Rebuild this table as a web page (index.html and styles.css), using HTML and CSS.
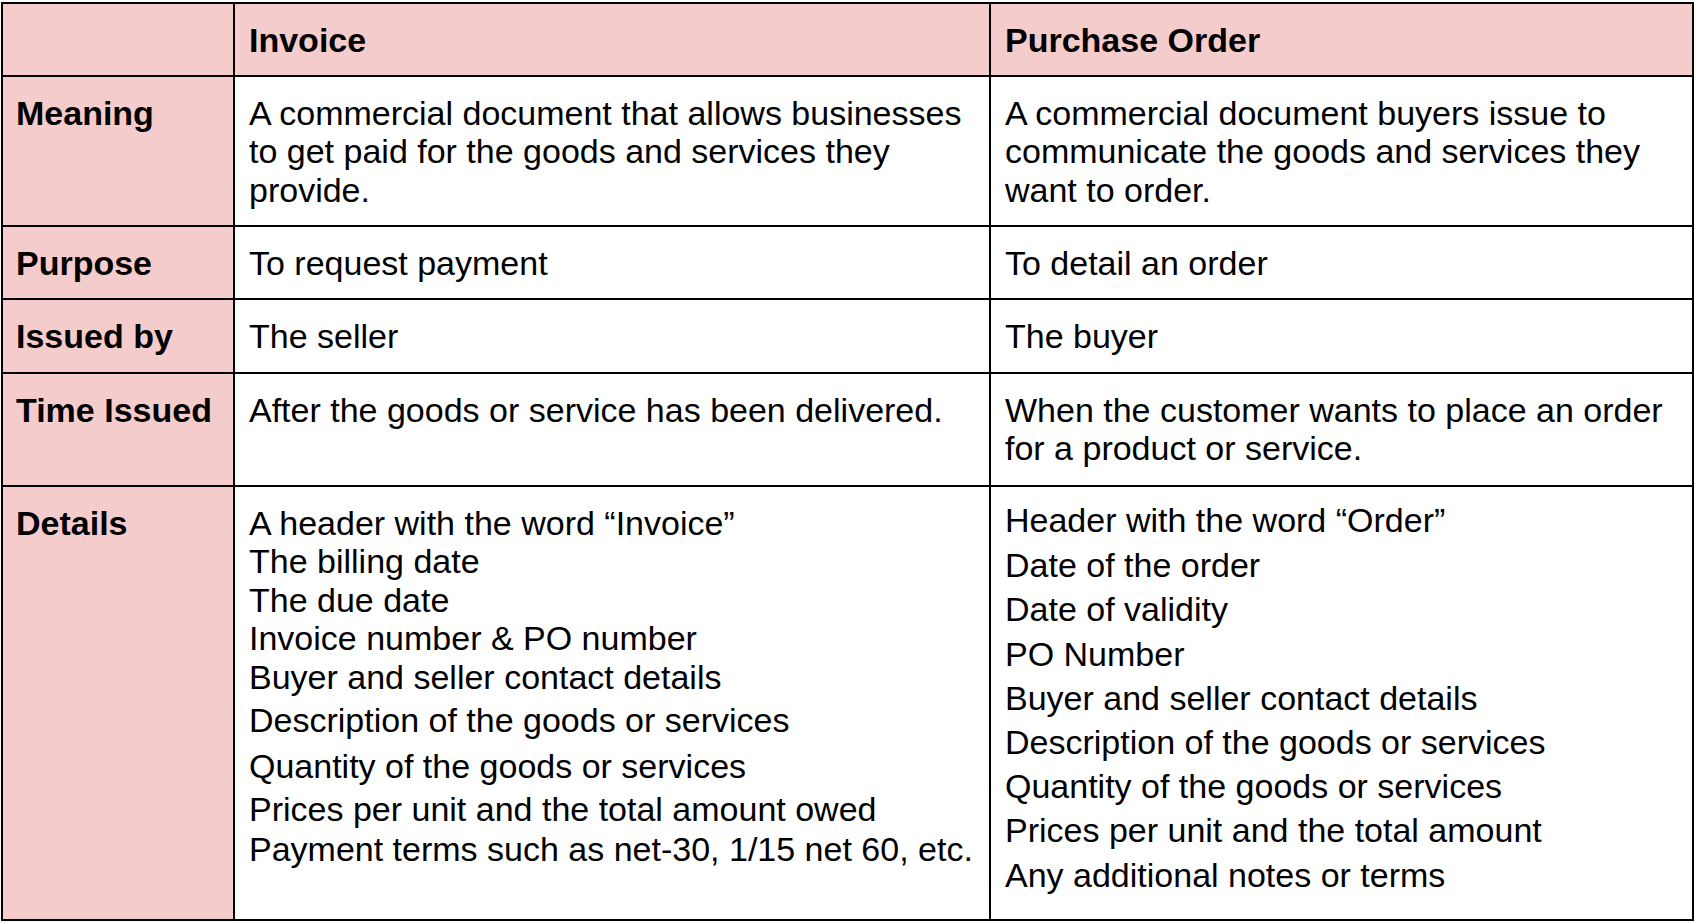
FILE: index.html
```html
<!DOCTYPE html>
<html lang="en">
<head>
<meta charset="utf-8">
<title>Invoice vs Purchase Order</title>
<link rel="stylesheet" href="styles.css">
</head>
<body>
<table class="compare">
  <colgroup>
    <col class="col-label">
    <col class="col-invoice">
    <col class="col-po">
  </colgroup>
  <tr class="row-head">
    <th class="cell label"></th>
    <th class="cell head">Invoice</th>
    <th class="cell head po">Purchase Order</th>
  </tr>
  <tr class="row-meaning">
    <td class="cell label">Meaning</td>
    <td class="cell">A commercial document that allows businesses to get paid for the goods and services they provide.</td>
    <td class="cell po">A commercial document buyers issue to communicate the goods and services they want to order.</td>
  </tr>
  <tr class="row-purpose">
    <td class="cell label">Purpose</td>
    <td class="cell">To request payment</td>
    <td class="cell po">To detail an order</td>
  </tr>
  <tr class="row-issued">
    <td class="cell label">Issued by</td>
    <td class="cell">The seller</td>
    <td class="cell po">The buyer</td>
  </tr>
  <tr class="row-time">
    <td class="cell label">Time Issued</td>
    <td class="cell">After the goods or service has been delivered.</td>
    <td class="cell po">When the customer wants to place an order for a product or service.</td>
  </tr>
  <tr class="row-details">
    <td class="cell label">Details</td>
    <td class="cell">
      <ul class="list inv-list">
        <li>A header with the word “Invoice”</li>
        <li>The billing date</li>
        <li>The due date</li>
        <li>Invoice number &amp; PO number</li>
        <li>Buyer and seller contact details</li>
        <li class="gap-5">Description of the goods or services</li>
        <li class="gap-7">Quantity of the goods or services</li>
        <li class="gap-4">Prices per unit and the total amount owed</li>
        <li class="gap-2">Payment terms such as net-30, 1/15 net 60, etc.</li>
      </ul>
    </td>
    <td class="cell po details-po">
      <ul class="list po-list">
        <li>Header with the word “Order”</li>
        <li class="gap-1">Date of the order</li>
        <li>Date of validity</li>
        <li>PO Number</li>
        <li>Buyer and seller contact details</li>
        <li>Description of the goods or services</li>
        <li>Quantity of the goods or services</li>
        <li>Prices per unit and the total amount</li>
        <li>Any additional notes or terms</li>
      </ul>
    </td>
  </tr>
</table>
</body>
</html>
```

FILE: styles.css
```css
html, body {
  margin: 0;
  padding: 0;
  background: #ffffff;
}

body {
  font-family: "Liberation Sans", Arial, sans-serif;
  color: #000000;
}

.compare {
  margin: 2px 0 0 1px;
  border-collapse: separate;
  border-spacing: 0;
  table-layout: fixed;
  width: 1693px;
  border-top: 2px solid #000;
  border-left: 2px solid #000;
}

.col-label { width: 232px; }
.col-invoice { width: 756px; }
.col-po { width: 703px; }

.cell {
  box-sizing: border-box;
  border-right: 2px solid #000;
  border-bottom: 2px solid #000;
  padding: 16.5px 10px 0 14px;
  vertical-align: top;
  text-align: left;
  font-size: 34px;
  line-height: 38.5px;
  font-weight: normal;
}

.cell.po {
  padding-left: 14px;
}

.label {
  background: #f4cccc;
  font-weight: bold;
  padding-left: 13px;
}

.head {
  background: #f4cccc;
  font-weight: bold;
}

.row-head { height: 73px; }
.row-meaning { height: 150px; }
.row-purpose { height: 73px; }
.row-issued { height: 74px; }
.row-time { height: 113px; }
.row-details { height: 434px; }

.list {
  list-style: none;
  margin: 0;
  padding: 0;
}

.list li {
  white-space: nowrap;
}

.gap-1 { margin-top: 1px; }
.gap-2 { margin-top: 1.5px; }
.gap-4 { margin-top: 4.5px; }
.gap-5 { margin-top: 5px; }
.gap-7 { margin-top: 7px; }

.details-po {
  padding-top: 11px;
}

.po-list li {
  line-height: 44.2px;
}
```
